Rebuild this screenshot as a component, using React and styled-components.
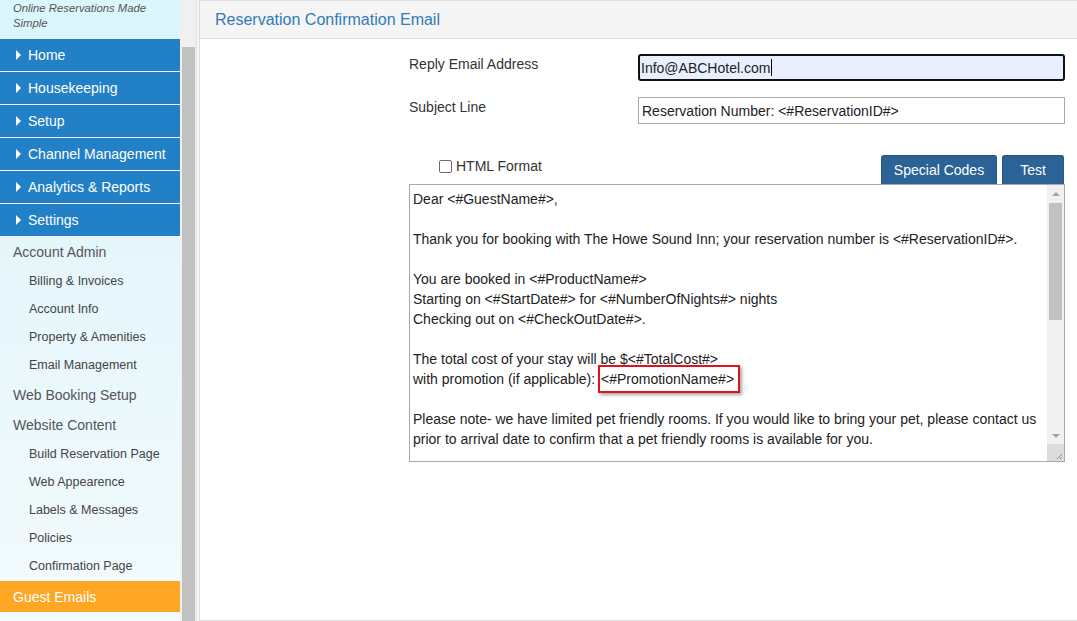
import React from "react";
import styled, { createGlobalStyle } from "styled-components";

const Global = createGlobalStyle`
  html, body { margin: 0; padding: 0; background: #fff; }
  body { font-family: "Liberation Sans", Arial, sans-serif; overflow: hidden; }
  * { box-sizing: border-box; }
`;

const Page = styled.div`
  display: flex;
  height: 621px;
  width: 1077px;
  overflow: hidden;
`;

const Sidebar = styled.aside`
  width: 180px;
  flex: 0 0 180px;
  display: flex;
  flex-direction: column;
  background: linear-gradient(#e3f5fb 0%, #e5f6fb 40%, #f3fbfd 100%);
`;

const Brand = styled.div`
  height: 39px;
  background: #dcf6fd;
  padding: 1px 0 0 13px;
  font-size: 11.3px;
  font-style: italic;
  line-height: 15px;
  color: #555;
`;

const NavItem = styled.div`
  height: 33px;
  display: flex;
  align-items: center;
  gap: 7px;
  padding-left: 16px;
  background: #2180c6;
  border-bottom: 1px solid #fff;
  color: #fff;
  font-size: 14px;
`;

const Arrow = styled.span`
  width: 0;
  height: 0;
  border-left: 5px solid #fff;
  border-top: 5px solid transparent;
  border-bottom: 5px solid transparent;
`;

const Heading = styled.div`
  height: 30px;
  display: flex;
  align-items: center;
  padding-left: 13px;
  font-size: 14px;
  color: #555;
`;

const SubList = styled.div`
  display: flex;
  flex-direction: column;
  padding-bottom: 1px;
`;

const SubItem = styled.div`
  height: 28px;
  display: flex;
  align-items: center;
  padding-left: 29px;
  font-size: 12.5px;
  color: #444;
`;

const ActiveItem = styled.div`
  height: 31px;
  display: flex;
  align-items: center;
  padding-left: 13px;
  background: #ffa625;
  color: #fff;
  font-size: 14px;
`;

const SideScroll = styled.div`
  width: 16px;
  flex: 0 0 16px;
  background: #f0f0f0;
  display: flex;
  flex-direction: column;
  padding: 47px 1px 0 2px;
`;

const SideThumb = styled.div`
  flex: 1;
  background: #c1c1c1;
`;

const Gutter = styled.div`
  width: 3px;
  flex: 0 0 3px;
  background: #f7f7f7;
  border-left: 1px solid #e2e2e2;
`;

const Panel = styled.main`
  flex: 1;
  border: 1px solid #ddd;
  border-right: none;
  display: flex;
  flex-direction: column;
  min-width: 0;
`;

const PanelHeader = styled.div`
  height: 38px;
  background: #f5f5f5;
  border-bottom: 1px solid #ddd;
  display: flex;
  align-items: center;
  padding-left: 15px;
  font-size: 16px;
  color: #337ab7;
`;

const PanelBody = styled.div`
  padding: 15px 0 0 209px;
`;

const Form = styled.div`
  width: 656px;
  display: flex;
  flex-direction: column;
`;

const Row = styled.div`
  display: flex;
  align-items: flex-start;
  margin-bottom: ${(p) => p.$gap || 16}px;
`;

const Label = styled.div`
  width: 229px;
  flex: 0 0 229px;
  font-size: 14px;
  line-height: 20px;
  color: #333;
`;

const Input = styled.div`
  flex: 1;
  height: 27px;
  display: flex;
  align-items: center;
  font-size: 14px;
  color: #222;
  background: ${(p) => (p.$focused ? "#e8f0fe" : "#fff")};
  border: ${(p) => (p.$focused ? "2px solid #111" : "1px solid #a9a9a9")};
  border-radius: ${(p) => (p.$focused ? "3px" : "0")};
  padding-left: ${(p) => (p.$focused ? "1px" : "3px")};
`;

const Caret = styled.span`
  display: inline-block;
  width: 1px;
  height: 17px;
  background: #000;
  margin-left: 1px;
`;

const Toolbar = styled.div`
  display: flex;
  justify-content: space-between;
  align-items: flex-start;
  padding-right: 1px;
`;

const CheckLabel = styled.label`
  display: flex;
  align-items: center;
  gap: 4px;
  padding: 1px 0 0 30px;
  font-size: 14px;
  color: #333;
  line-height: 20px;
`;

const Box = styled.span`
  width: 13px;
  height: 13px;
  border: 1px solid #6b6b6b;
  border-radius: 2px;
  background: #fff;
`;

const Buttons = styled.div`
  display: flex;
  gap: 5px;
`;

const Button = styled.button`
  height: 29px;
  width: ${(p) => p.$w}px;
  background: #2b6396;
  border: 1px solid #25577f;
  border-bottom: none;
  border-radius: 3px 3px 0 0;
  color: #fff;
  font-family: inherit;
  font-size: 14px;
  padding: 0;
`;

const TextArea = styled.div`
  height: 278px;
  border: 1px solid #a9a9a9;
  display: flex;
`;

const Content = styled.div`
  flex: 1;
  padding: 4px 3px;
  font-size: 14px;
  line-height: 20px;
  color: #222;
  overflow: hidden;
`;

const Line = styled.div`
  height: 20px;
  white-space: nowrap;
`;

const Marked = styled.span`
  position: relative;
  margin-left: 2px;
  &::after {
    content: "";
    position: absolute;
    left: -3px;
    right: -6px;
    top: -6px;
    bottom: -6px;
    border: 2px solid #e3131b;
    box-shadow: 2px 2px 3px rgba(0, 0, 0, 0.35);
  }
`;

const VScroll = styled.div`
  width: 17px;
  flex: 0 0 17px;
  background: #f1f1f1;
  display: flex;
  flex-direction: column;
`;

const ScrollBtn = styled.div`
  height: 17px;
  display: flex;
  align-items: center;
  justify-content: center;
`;

const Tri = styled.span`
  width: 0;
  height: 0;
  border-left: 4px solid transparent;
  border-right: 4px solid transparent;
  ${(p) =>
    p.$down
      ? "border-top: 4px solid #a3a3a3;"
      : "border-bottom: 4px solid #a3a3a3;"}
`;

const Thumb = styled.div`
  height: 117px;
  margin: 1px 2px 0 2px;
  background: #c1c1c1;
`;

const Track = styled.div`
  flex: 1;
`;

const Corner = styled.div`
  height: 17px;
  background: #dcdcdc;
  display: flex;
  align-items: flex-end;
  justify-content: flex-end;
`;

const lines = [
  "Dear <#GuestName#>,",
  "",
  "Thank you for booking with The Howe Sound Inn; your reservation number is <#ReservationID#>.",
  "",
  "You are booked in <#ProductName#>",
  "Starting on <#StartDate#> for <#NumberOfNights#> nights",
  "Checking out on <#CheckOutDate#>.",
  "",
  "The total cost of your stay will be $<#TotalCost#>",
  null,
  "",
  "Please note- we have limited pet friendly rooms. If you would like to bring your pet, please contact us",
  "prior to arrival date to confirm that a pet friendly rooms is available for you.",
  "",
];

export default function App() {
  return (
    <>
      <Global />
      <Page>
        <Sidebar>
          <Brand>
            Online Reservations Made
            <br />
            Simple
          </Brand>
          {["Home", "Housekeeping", "Setup", "Channel Management", "Analytics & Reports", "Settings"].map((t) => (
            <NavItem key={t}>
              <Arrow />
              {t}
            </NavItem>
          ))}
          <Heading>Account Admin</Heading>
          <SubList>
            {["Billing & Invoices", "Account Info", "Property & Amenities", "Email Management"].map((t) => (
              <SubItem key={t}>{t}</SubItem>
            ))}
          </SubList>
          <Heading>Web Booking Setup</Heading>
          <Heading>Website Content</Heading>
          <SubList>
            {["Build Reservation Page", "Web Appearence", "Labels & Messages", "Policies", "Confirmation Page"].map((t) => (
              <SubItem key={t}>{t}</SubItem>
            ))}
          </SubList>
          <ActiveItem>Guest Emails</ActiveItem>
        </Sidebar>
        <SideScroll>
          <SideThumb />
        </SideScroll>
        <Gutter />
        <Panel>
          <PanelHeader>Reservation Confirmation Email</PanelHeader>
          <PanelBody>
            <Form>
              <Row>
                <Label>Reply Email Address</Label>
                <Input $focused>
                  Info@ABCHotel.com
                  <Caret />
                </Input>
              </Row>
              <Row $gap={31}>
                <Label>Subject Line</Label>
                <Input>Reservation Number: &lt;#ReservationID#&gt;</Input>
              </Row>
              <Toolbar>
                <CheckLabel>
                  <Box />
                  HTML Format
                </CheckLabel>
                <Buttons>
                  <Button $w={116}>Special Codes</Button>
                  <Button $w={62}>Test</Button>
                </Buttons>
              </Toolbar>
              <TextArea>
                <Content>
                  {lines.map((l, i) =>
                    l === null ? (
                      <Line key={i}>
                        with promotion (if applicable): <Marked>&lt;#PromotionName#&gt;</Marked>
                      </Line>
                    ) : (
                      <Line key={i}>{l}</Line>
                    )
                  )}
                </Content>
                <VScroll>
                  <ScrollBtn>
                    <Tri />
                  </ScrollBtn>
                  <Thumb />
                  <Track />
                  <ScrollBtn>
                    <Tri $down />
                  </ScrollBtn>
                  <Corner>
                    <svg width="17" height="17" viewBox="0 0 17 17">
                      <path d="M15 10 L10 15 M15 13 L13 15" stroke="#888" strokeWidth="1" />
                    </svg>
                  </Corner>
                </VScroll>
              </TextArea>
            </Form>
          </PanelBody>
        </Panel>
      </Page>
    </>
  );
}
